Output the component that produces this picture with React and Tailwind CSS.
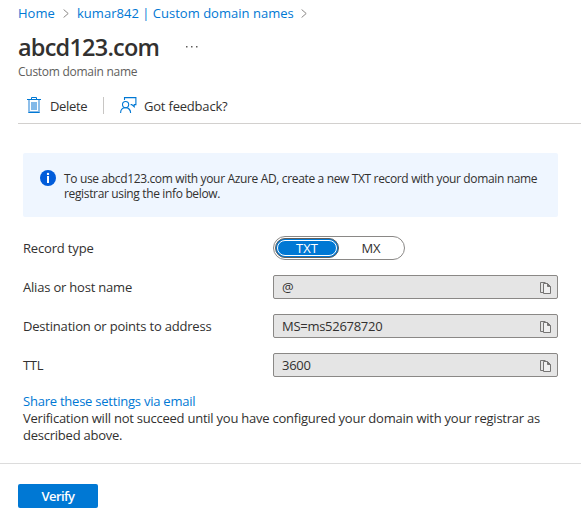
import React from "react";

function Chevron({ className }) {
  return (
    <svg width="6" height="9" viewBox="0 0 6 9" fill="none" stroke="#8a8886" className={className}>
      <path d="M0.6 0.5 L5.2 4.5 L0.6 8.5" />
    </svg>
  );
}

function TrashIcon() {
  return (
    <svg width="14" height="17" viewBox="0 0 14 17" fill="none" className="shrink-0">
      <path d="M2 3v12h10V3" fill="#fff" stroke="#83b9e8" strokeWidth="1.8" />
      <rect x="4" y="5" width="6" height="8" fill="#83b9e8" />
      <path d="M0 2.5h14M4.5 2V0.5h5V2" stroke="#0078d4" />
      <path d="M1.5 15.5h11" stroke="#0078d4" />
    </svg>
  );
}

function FeedbackIcon() {
  return (
    <svg width="17" height="17" viewBox="0 0 17 17" fill="none" stroke="#0078d4" strokeWidth="1.1" className="shrink-0">
      <path d="M4.5 3V0.6h11.4v7h-1.7v2.2l-2.4-2.2h-1.2" />
      <circle cx="5.6" cy="7.6" r="3.1" />
      <path d="M0.6 16c0-3 2-5.2 5-5.2s5 2.2 5 5.2" />
    </svg>
  );
}

function InfoIcon() {
  return (
    <svg width="16" height="16" viewBox="0 0 16 16" className="shrink-0">
      <circle cx="8" cy="8" r="8" fill="#015cda" />
      <circle cx="8" cy="3.9" r="1.2" fill="#fff" />
      <rect x="7" y="6" width="2" height="7" fill="#fff" />
    </svg>
  );
}

function CopyIcon() {
  return (
    <svg width="11" height="12" viewBox="0 0 11 12" fill="none" stroke="#767574" className="mt-[2px]">
      <path d="M3 10.5H0.5V0.5H5.5" />
      <path d="M3.5 1.5H7.5L10.5 4.5V11.5H3.5Z" fill="#f0f0f0" />
      <path d="M7.5 1.5V4.5H10.5" fill="#767574" />
    </svg>
  );
}

function Field({ label, value, labelClass }) {
  return (
    <div className="mb-[15px] flex h-6 items-center">
      <div className={`w-[250px] leading-6 ${labelClass}`}>{label}</div>
      <div className="flex h-6 w-[285px] items-center justify-between rounded-[2px] border border-[#8a8886] bg-[#e5e5e5] pr-[6px] pl-2">
        <span className="leading-[22px] tracking-[-0.28px]">{value}</span>
        <CopyIcon />
      </div>
    </div>
  );
}

export default function App() {
  return (
    <div className="h-[514px] w-[581px] overflow-hidden bg-white font-['Open_Sans','Noto_Sans',sans-serif] text-[13px] whitespace-nowrap text-[#323130]">
      <nav className="flex h-[27px] items-center pl-[18px] text-[#0078d4]">
        <span className="w-[37px]">Home</span>
        <Chevron className="mr-[8px] ml-[8px]" />
        <span className="w-[217px] tracking-[0.02px]">kumar842 | Custom domain names</span>
        <Chevron className="ml-[7px]" />
      </nav>

      <header className="pl-[18px]">
        <div className="flex h-10 items-center">
          <h1 className="w-[168px] text-[23.5px] leading-10 font-semibold tracking-[-0.78px]">abcd123.com</h1>
          <svg width="12" height="2" viewBox="0 0 12 2" fill="#605e5c">
            <rect x="0" width="1.5" height="1.5" />
            <rect x="5" width="1.5" height="1.5" />
            <rect x="10" width="1.5" height="1.5" />
          </svg>
        </div>
        <p className="h-[18px] text-[12px] leading-[10px] tracking-[-0.27px] text-[#605e5c]">Custom domain name</p>
      </header>

      <div className="ml-[18px] flex h-[39px] items-center border-b border-[#d2d0ce] pt-[2px] pl-[9px]">
        <TrashIcon />
        <span className="ml-[9px] w-[53px] pt-[3px] tracking-[-0.35px]">Delete</span>
        <div className="h-[17px] w-px bg-[#c8c6c4]" />
        <div className="ml-4">
          <FeedbackIcon />
        </div>
        <span className="ml-[7px] pt-[3px] tracking-[-0.2px]">Got feedback?</span>
      </div>

      <main className="h-[339px] pt-[29px] pl-[23px]">
        <div className="mb-[19px] flex h-16 w-[535px] rounded-[2px] bg-[#eff6ff] pt-[17px] pl-[17px]">
          <InfoIcon />
          <p className="ml-2 pt-px text-[12px] leading-[15px] tracking-[-0.35px]">
            To use abcd123.com with your Azure AD, create a new TXT record with your domain name
            <br />
            registrar using the info below.
          </p>
        </div>

        <div className="mb-[15px] flex h-6 items-center">
          <div className="w-[250px] leading-6 tracking-[-0.17px]">Record type</div>
          <div className="flex h-6 w-[132px] items-center rounded-full border border-[#8a8886] pl-px">
            <div className="flex h-5 w-16 items-center rounded-full border border-[#605e5c] bg-[#0078d4] p-px">
              <div className="flex h-4 w-full items-center justify-center rounded-full border border-white leading-4 text-white">TXT</div>
            </div>
            <div className="flex-1 pt-px pr-px text-center">MX</div>
          </div>
        </div>
        <Field label="Alias or host name" value="@" labelClass="tracking-[-0.2px]" />
        <Field label="Destination or points to address" value="MS=ms52678720" labelClass="tracking-[-0.2px]" />
        <Field label="TTL" value="3600" labelClass="tracking-[-0.3px]" />

        <div className="pt-px leading-[17px]">
          <a className="block tracking-[-0.23px] text-[#0078d4]">Share these settings via email</a>
          <p className="tracking-[-0.235px]">
            Verification will not succeed until you have configured your domain with your registrar as
            <br />
            described above.
          </p>
        </div>
      </main>

      <footer className="border-t border-[#dcdcdc] pt-5 pl-[18px]">
        <button className="flex h-6 w-20 items-center justify-center rounded-[2px] bg-[#0078d4] pt-px font-semibold tracking-[-0.6px] text-white">Verify</button>
      </footer>
    </div>
  );
}
